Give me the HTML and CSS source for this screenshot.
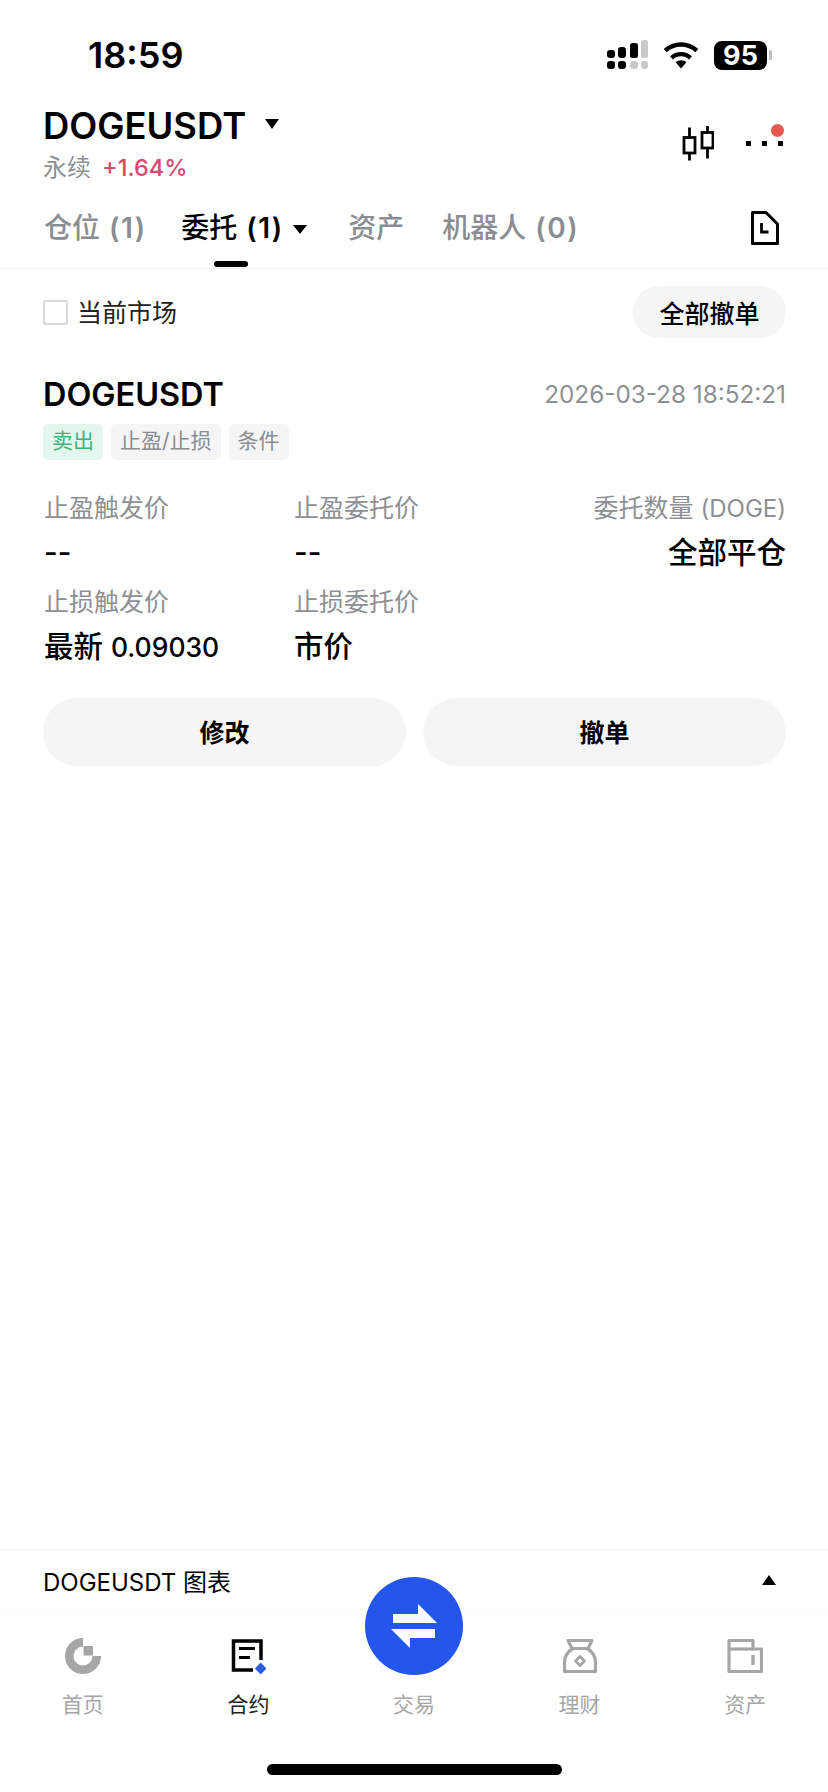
FILE: index.html
```html
<!DOCTYPE html>
<html lang="zh-CN">
<head>
<meta charset="utf-8">
<title>DOGEUSDT</title>
<link rel="stylesheet" href="styles.css">
</head>
<body>
<div class="app">
  <div class="status">
    <span class="time">18:59</span>
    <div class="status-icons">
      <svg class="signal" width="42" height="30" viewBox="0 0 42 30">
        <g fill="#000">
          <rect x="0" y="10" width="8" height="8" rx="3"/><rect x="11" y="7" width="8" height="11" rx="3"/><rect x="23" y="3" width="8" height="15" rx="2.5"/>
          <rect x="0" y="21" width="8" height="8" rx="3"/><rect x="11" y="21" width="8" height="8" rx="3"/>
        </g>
        <g fill="#c9c9c9">
          <rect x="34" y="0" width="7" height="18" rx="2.5"/><rect x="23" y="21" width="8" height="8" rx="3"/><rect x="34" y="21" width="7" height="8" rx="3"/>
        </g>
      </svg>
      <svg class="wifi" width="36" height="27" viewBox="0 0 36 27">
        <path d="M18 26.500 12.600 20.300a8 8 0 0 1 10.800 0Z" fill="#000"/>
        <path d="M8.500 15.800a14 14 0 0 1 19 0" fill="none" stroke="#000" stroke-width="4.400"/>
        <path d="M2.200 8.600a23.500 23.500 0 0 1 31.600 0" fill="none" stroke="#000" stroke-width="4.400"/>
      </svg>
      <div class="battery"><span class="battery-body">95</span><span class="battery-tip"></span></div>
    </div>
  </div>

  <header class="head">
    <div>
      <div class="symbol-row"><h1 class="symbol">DOGEUSDT</h1><span class="caret caret-lg"></span></div>
      <div class="sub"><span class="sub-type">永续</span><span class="sub-change">+1.64%</span></div>
    </div>
    <div class="head-actions">
      <svg width="32" height="36" viewBox="0 0 32 36" fill="none" stroke="#000" stroke-width="2.800">
        <path d="M7.500 2.500V12.500M7.500 28V35.500"/>
        <rect x="2" y="12.500" width="11" height="15.500"/>
        <path d="M25.500 1V7.500M25.500 23V33.500"/>
        <rect x="20" y="7.500" width="11" height="15.500"/>
      </svg>
      <div class="more"><i></i><i></i><i></i><b></b></div>
    </div>
  </header>

  <nav class="tabs">
    <span class="tab">仓位<em>(1)</em></span>
    <span class="tab tab-on">委托<em>(1)</em><span class="caret"></span></span>
    <span class="tab">资产</span>
    <span class="tab">机器人<em>(0)</em></span>
    <svg class="doc" width="28" height="34" viewBox="0 0 28 34" fill="none" stroke="#000" stroke-width="3">
      <path d="M1.500 1.500H15L26.500 13V32.500H1.500Z" stroke-linejoin="round"/>
      <path d="M10.500 12V21H17.500" stroke-width="2.800"/>
    </svg>
  </nav>

  <main class="main">
    <div class="toolbar">
      <label class="check"><span class="box"></span><span class="check-text">当前市场</span></label>
      <button class="pill">全部撤单</button>
    </div>

    <section class="order">
      <div class="order-top">
        <span class="order-name">DOGEUSDT</span>
        <span class="order-date">2026-03-28 18:52:21</span>
      </div>
      <div class="tags">
        <span class="tag tag-sell">卖出</span>
        <span class="tag">止盈/止损</span>
        <span class="tag">条件</span>
      </div>
      <div class="fields">
        <div class="field"><span class="label">止盈触发价</span><span class="value">--</span></div>
        <div class="field"><span class="label">止盈委托价</span><span class="value">--</span></div>
        <div class="field field-end"><span class="label">委托数量 <span class="label-unit">(DOGE)</span></span><span class="value">全部平仓</span></div>
        <div class="field"><span class="label">止损触发价</span><span class="value">最新 <span class="num">0.09030</span></span></div>
        <div class="field"><span class="label">止损委托价</span><span class="value">市价</span></div>
      </div>
      <div class="actions">
        <button class="action">修改</button>
        <button class="action">撤单</button>
      </div>
    </section>
  </main>

  <footer class="foot">
    <div class="chart-row">
      <span>DOGEUSDT 图表</span>
      <span class="caret-up"></span>
    </div>
    <div class="nav">
      <div class="nav-item">
        <svg width="36" height="36" viewBox="0 0 36 36" fill="#a6a6a6">
          <path d="M18 0A18 18 0 1 0 36 18H27.500A9.500 9.500 0 1 1 18 8.500Z"/>
          <rect x="18.500" y="8" width="9.500" height="9.500"/>
        </svg>
        <span>首页</span>
      </div>
      <div class="nav-item nav-on">
        <svg width="36" height="36" viewBox="0 0 36 36">
          <path d="M31 22V3H3.500V32H23" fill="none" stroke="#000" stroke-width="3.500"/>
          <path d="M9 10.500H25M9 19.500H20" fill="none" stroke="#000" stroke-width="3.200"/>
          <path d="M30.700 24.500 36.500 30.500 30.700 36.500 24.900 30.500Z" fill="#2a5ce8"/>
        </svg>
        <span>合约</span>
      </div>
      <div class="nav-item">
        <div class="icon-gap"></div>
        <span>交易</span>
        <div class="fab">
          <svg width="98" height="98" viewBox="0 0 98 98" fill="#fff">
            <path d="M28 37H53V27L72 46H28Z"/>
            <path d="M70 61H45V71L26 52H70Z"/>
          </svg>
        </div>
      </div>
      <div class="nav-item">
        <svg width="36" height="36" viewBox="0 0 36 36" fill="none" stroke="#a6a6a6" stroke-width="3.200" stroke-linejoin="round">
          <path d="M6 2.500H30L26 10.500H10Z"/>
          <path d="M11 10.500C5 14 2.500 19 2.500 25V33.500H33.500V25C33.500 19 31 14 25 10.500"/>
          <path d="M18 18.500 22.500 23 18 27.500 13.500 23Z" stroke-width="2.800"/>
        </svg>
        <span>理财</span>
      </div>
      <div class="nav-item">
        <svg width="36" height="36" viewBox="0 0 36 36" fill="none" stroke="#a6a6a6" stroke-width="3.200" stroke-linejoin="round">
          <path d="M2 2.500H26V11H34.500V33.500H2Z"/>
          <path d="M2 11H26"/>
          <path d="M26 17V27" stroke-width="3.400"/>
        </svg>
        <span>资产</span>
      </div>
    </div>
    <div class="home-bar"></div>
  </footer>
</div>
</body>
</html>
```

FILE: styles.css
```css
* { box-sizing: border-box; }
html, body { margin: 0; padding: 0; background: #fff; }
body {
  font-family: Inter, "Noto Sans CJK SC", sans-serif;
  color: #000;
}
em { font-style: normal; }
h1 { margin: 0; }
button { font-family: inherit; border: 0; color: #000; padding: 0; }

.app { width: 828px; height: 1792px; display: flex; flex-direction: column; overflow: hidden; }

/* status bar */
.status {
  height: 96px;
  padding: 14px 56px 0 88px;
  display: flex;
  justify-content: space-between;
  align-items: center;
}
.time { font-size: 36px; font-weight: 600; line-height: 40px; }
.status-icons { display: flex; align-items: center; gap: 14px; }
.signal { display: block; }
.wifi { display: block; }
.battery { display: flex; align-items: center; gap: 2px; margin-left: 1px; }
.battery-body {
  width: 53px; height: 29px; border-radius: 8px;
  background: #000; color: #fff;
  font-size: 27px; font-weight: 700; line-height: 29px; text-align: center;
}
.battery-tip { width: 3px; height: 10px; border-radius: 0 2px 2px 0; background: #bdbdbd; }

/* header */
.head {
  height: 112px;
  padding: 10px 45px 0 43px;
  display: flex;
  justify-content: space-between;
}
.symbol-row { display: flex; align-items: center; height: 40px; }
.symbol { font-size: 36.400px; font-weight: 600; line-height: 40px; }
.caret {
  display: inline-block; width: 0; height: 0;
  border-left: 7px solid transparent; border-right: 7px solid transparent;
  border-top: 9px solid #000;
}
.caret-lg { margin-left: 19px; margin-bottom: 4px; border-left-width: 7.500px; border-right-width: 7.500px; border-top-width: 10px; }
.sub { margin-top: 6px; display: flex; align-items: center; gap: 11px; font-size: 23.500px; line-height: 32px; }
.sub-type { color: #8e9094; font-size: 24px; }
.sub-change { color: #d9486f; font-weight: 500; }
.head-actions { display: flex; align-items: flex-start; gap: 32px; padding-top: 19px; }
.head-actions svg { display: block; }
.more { position: relative; width: 37px; height: 36px; display: flex; justify-content: space-between; align-items: center; }
.more i { width: 5px; height: 5px; background: #000; }
.more b { position: absolute; right: -1px; top: -1.500px; width: 13px; height: 13px; border-radius: 50%; background: #e5584f; }

/* tabs */
.tabs {
  height: 61px;
  padding: 0 49px 0 44px;
  display: flex;
  align-items: flex-start;
  border-bottom: 1px solid #f0f0f0;
  font-size: 28px;
  line-height: 40px;
  color: #8a8d91;
}
.tab { position: relative; margin-right: 38px; font-weight: 500; white-space: nowrap; display: flex; align-items: center; gap: 9px; }
.tab em { font-size: 28px; font-weight: 600; letter-spacing: 1.500px; }
.tab-on { color: #000; margin-left: -3.400px; margin-right: 41.400px; }
.tab-on .caret { margin-top: 2px; }
.tab-on::after {
  content: ""; position: absolute; left: 33px; top: 53px;
  width: 34px; height: 6px; border-radius: 3px; background: #000;
}
.doc { display: block; margin-left: auto; margin-top: 3px; }

/* toolbar */
.main { flex: 1; padding: 17px 42px 0 44px; }
.toolbar { display: flex; justify-content: space-between; align-items: center; height: 52px; }
.check { display: flex; align-items: center; gap: 9px; font-size: 25px; color: #222; }
.check-text { margin-top: -3px; }
.box { width: 25px; height: 25px; border: 2px solid #d8d8d8; border-radius: 3px; margin-left: -1px; }
.pill {
  width: 153px; height: 52px; border-radius: 26px;
  background: #f5f5f5; font-size: 25px; font-weight: 500;
}

/* order */
.order { margin-top: 38px; }
.order-top { display: flex; justify-content: space-between; align-items: center; height: 36px; }
.order-name { font-size: 32.400px; font-weight: 600; margin-left: -1px; }
.order-date { font-size: 24.300px; color: #8e9094; }
.tags { display: flex; gap: 8px; margin-top: 12px; margin-left: -1px; }
.tag {
  height: 36px; padding: 0 9px; border-radius: 5px;
  background: #f5f5f5; color: #8a8d91;
  font-size: 21px; line-height: 33px;
}
.tag-sell { background: #e4f7ee; color: #3db37f; }
.fields {
  margin-top: 31px;
  display: grid;
  grid-template-columns: 250px 250px 1fr;
  row-gap: 16px;
}
.field { display: flex; flex-direction: column; gap: 10px; }
.field-end { align-items: flex-end; }
.label { font-size: 25px; line-height: 34px; height: 34px; color: #8e9094; }
.label-unit { font-size: 24px; }
.value { font-size: 29.500px; line-height: 34px; height: 34px; font-weight: 500; color: #000; }
.num { font-size: 26.500px; }
.actions { display: flex; gap: 17px; margin: 35px 0 0 -1px; }
.action { flex: 1; height: 68px; border-radius: 34px; background: #f5f5f5; font-size: 25px; font-weight: 600; padding-bottom: 2px; }

/* footer */
.foot { height: 243px; }
.chart-row {
  height: 61px;
  padding: 0 52px 0 43px;
  display: flex;
  justify-content: space-between;
  align-items: center;
  border-top: 1px solid #f2f2f2;
  font-size: 24px;
}
.caret-up {
  width: 0; height: 0;
  border-left: 7.500px solid transparent; border-right: 7.500px solid transparent;
  border-bottom: 10px solid #000;
}
.nav {
  display: grid;
  grid-template-columns: repeat(5, 1fr);
  height: 154px;
  padding-top: 27px;
  border-top: 1px solid #fafafa;
}
.nav-item {
  position: relative;
  display: flex; flex-direction: column; align-items: center; gap: 16px;
  font-size: 21px; line-height: 30px; color: #a6a6a6;
}
.nav-item svg { display: block; }
.nav-on { color: #222; }
.icon-gap { width: 36px; height: 36px; }
.fab {
  position: absolute; left: 50%; top: -61px; margin-left: -49px;
  width: 98px; height: 98px; border-radius: 50%; background: #2456ee;
}
.home-bar {
  width: 295px; height: 11px; border-radius: 6px; background: #000;
  margin-left: 267px;
}
```
